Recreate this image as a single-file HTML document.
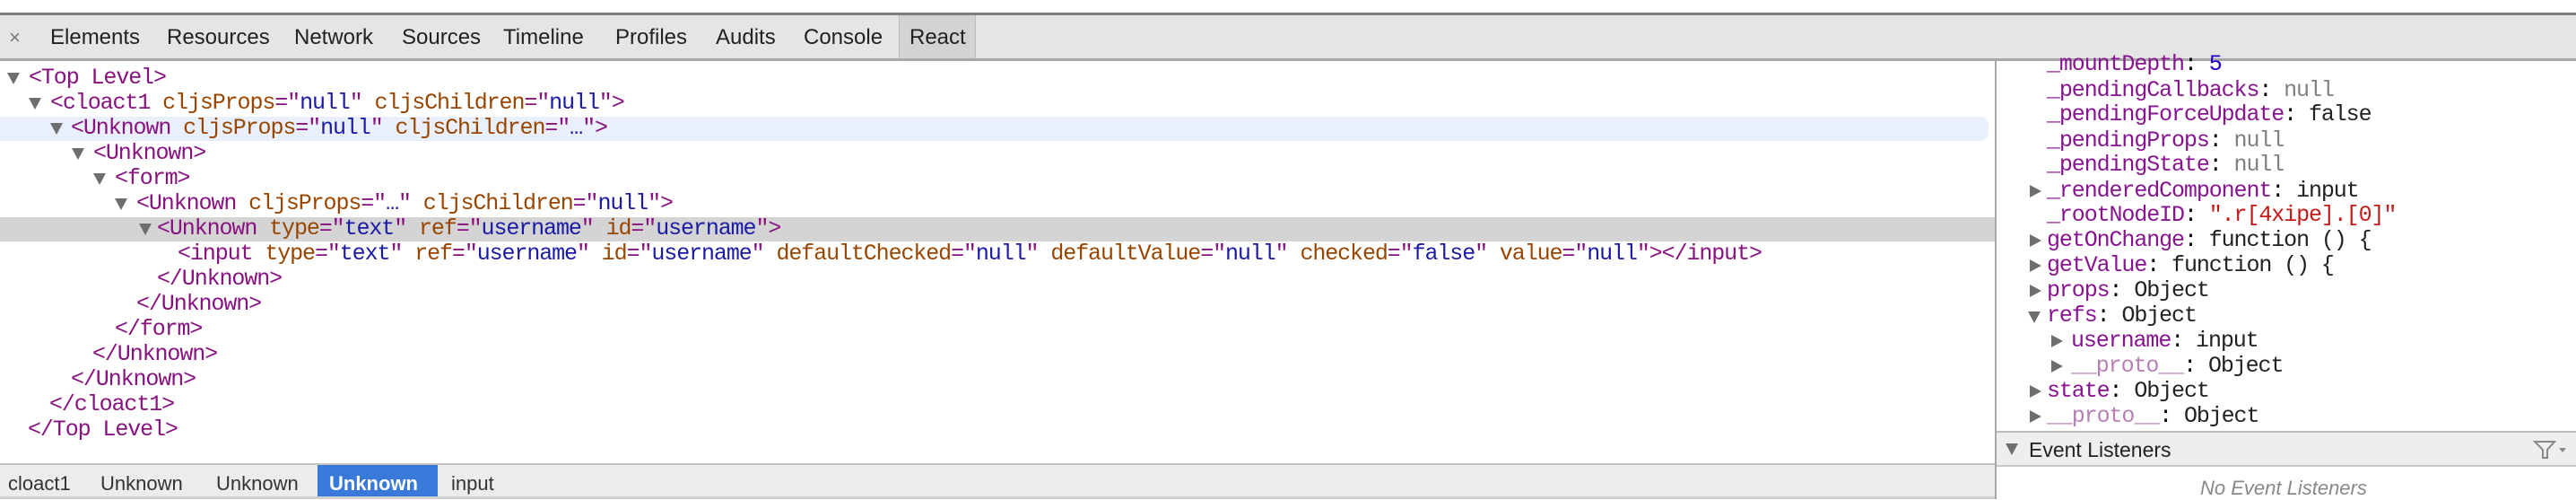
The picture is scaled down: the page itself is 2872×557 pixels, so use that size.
<!DOCTYPE html>
<html><head><meta charset="utf-8"><style>
*{margin:0;padding:0;box-sizing:border-box}
body{width:2872px;height:556px;background:#fff;position:relative;overflow:hidden;font-family:"Liberation Sans",sans-serif}
.tb{position:absolute;left:0;top:14px;width:2872px;height:54px;background:#e5e5e5;border-top:3px solid #7d7d7d;border-bottom:3px solid #a8a8a8}
.tab{position:absolute;top:11px;font-size:24px;color:#222}
.react{position:absolute;left:1002px;top:0;width:86px;height:48px;background:#d3d3d3;border-left:1px solid #bbb;border-right:1px solid #bbb}
.m{font-family:"Liberation Mono",monospace;font-size:25px;letter-spacing:-1.1px;white-space:pre;position:absolute;line-height:28px;height:28px}
.t{color:#881280}.a{color:#994500}.v{color:#1a1aa6}
.tri{position:absolute;width:0;height:0;border-left:7px solid transparent;border-right:7px solid transparent;border-top:13px solid #6e6e6e}
.trr{position:absolute;width:0;height:0;border-top:7px solid transparent;border-bottom:7px solid transparent;border-left:13px solid #6e6e6e}
.k{color:#881391}.n{color:#808080}.b{color:#222}.s{color:#c41a16}.num{color:#1c00cf}.p{color:#b77fb4}
.bc{position:absolute;top:8px;font-size:22px;color:#333}
</style></head><body>
<div class="tb">
<div class="tab" style="left:10px;color:#777;font-size:22px;top:12px">×</div>
<div class="tab" style="left:56px">Elements</div>
<div class="tab" style="left:186px">Resources</div>
<div class="tab" style="left:328px">Network</div>
<div class="tab" style="left:448px">Sources</div>
<div class="tab" style="left:561px">Timeline</div>
<div class="tab" style="left:686px">Profiles</div>
<div class="tab" style="left:798px">Audits</div>
<div class="tab" style="left:896px">Console</div>
<div class="react"></div>
<div class="tab" style="left:1014px">React</div>
</div>

<div style="position:absolute;left:0;top:130px;width:2217px;height:27px;background:#e9f0fb;border-radius:0 9px 9px 0"></div>
<div style="position:absolute;left:0;top:242px;width:2225px;height:27px;background:#d4d4d4"></div>

<div class="tri" style="left:8px;top:81px"></div>
<div class="m t" style="left:32px;top:73px">&lt;Top Level&gt;</div>
<div class="tri" style="left:32px;top:109px"></div>
<div class="m" style="left:56px;top:101px"><span class="t">&lt;cloact1</span> <span class="a">cljsProps</span><span class="t">="</span><span class="v">null</span><span class="t">"</span> <span class="a">cljsChildren</span><span class="t">="</span><span class="v">null</span><span class="t">"&gt;</span></div>
<div class="tri" style="left:56px;top:137px"></div>
<div class="m" style="left:79px;top:129px"><span class="t">&lt;Unknown</span> <span class="a">cljsProps</span><span class="t">="</span><span class="v">null</span><span class="t">"</span> <span class="a">cljsChildren</span><span class="t">="</span><span class="v">…</span><span class="t">"&gt;</span></div>
<div class="tri" style="left:80px;top:165px"></div>
<div class="m t" style="left:104px;top:157px">&lt;Unknown&gt;</div>
<div class="tri" style="left:104px;top:193px"></div>
<div class="m t" style="left:128px;top:185px">&lt;form&gt;</div>
<div class="tri" style="left:128px;top:221px"></div>
<div class="m" style="left:152px;top:213px"><span class="t">&lt;Unknown</span> <span class="a">cljsProps</span><span class="t">="</span><span class="v">…</span><span class="t">"</span> <span class="a">cljsChildren</span><span class="t">="</span><span class="v">null</span><span class="t">"&gt;</span></div>
<div class="tri" style="left:155px;top:249px"></div>
<div class="m" style="left:175px;top:241px"><span class="t">&lt;Unknown</span> <span class="a">type</span><span class="t">="</span><span class="v">text</span><span class="t">"</span> <span class="a">ref</span><span class="t">="</span><span class="v">username</span><span class="t">"</span> <span class="a">id</span><span class="t">="</span><span class="v">username</span><span class="t">"&gt;</span></div>
<div class="m" style="left:198px;top:269px"><span class="t">&lt;input</span> <span class="a">type</span><span class="t">="</span><span class="v">text</span><span class="t">"</span> <span class="a">ref</span><span class="t">="</span><span class="v">username</span><span class="t">"</span> <span class="a">id</span><span class="t">="</span><span class="v">username</span><span class="t">"</span> <span class="a">defaultChecked</span><span class="t">="</span><span class="v">null</span><span class="t">"</span> <span class="a">defaultValue</span><span class="t">="</span><span class="v">null</span><span class="t">"</span> <span class="a">checked</span><span class="t">="</span><span class="v">false</span><span class="t">"</span> <span class="a">value</span><span class="t">="</span><span class="v">null</span><span class="t">"&gt;&lt;/input&gt;</span></div>
<div class="m t" style="left:175px;top:297px">&lt;/Unknown&gt;</div>
<div class="m t" style="left:152px;top:325px">&lt;/Unknown&gt;</div>
<div class="m t" style="left:128px;top:353px">&lt;/form&gt;</div>
<div class="m t" style="left:103px;top:381px">&lt;/Unknown&gt;</div>
<div class="m t" style="left:79px;top:409px">&lt;/Unknown&gt;</div>
<div class="m t" style="left:55px;top:437px">&lt;/cloact1&gt;</div>
<div class="m t" style="left:31px;top:465px">&lt;/Top Level&gt;</div>

<div style="position:absolute;left:0;top:516px;width:2225px;height:40px;background:#ececec;border-top:2px solid #c4c4c4;border-bottom:3px solid #d0d0d0">
<div class="bc" style="left:9px">cloact1</div>
<div class="bc" style="left:112px">Unknown</div>
<div class="bc" style="left:241px">Unknown</div>
<div style="position:absolute;left:354px;top:0;width:134px;height:35px;background:#3879d9"></div>
<div class="bc" style="left:367px;color:#fff;font-weight:bold">Unknown</div>
<div class="bc" style="left:503px">input</div>
</div>

<div style="position:absolute;left:2224px;top:68px;width:2px;height:488px;background:#a8a8a8"></div>
<div class="m" style="left:2282px;top:58px"><span class="k">_mountDepth</span>: <span class="num">5</span></div>
<div class="m" style="left:2282px;top:87px"><span class="k">_pendingCallbacks</span>: <span class="n">null</span></div>
<div class="m" style="left:2282px;top:114px"><span class="k">_pendingForceUpdate</span>: <span class="b">false</span></div>
<div class="m" style="left:2282px;top:143px"><span class="k">_pendingProps</span>: <span class="n">null</span></div>
<div class="m" style="left:2282px;top:170px"><span class="k">_pendingState</span>: <span class="n">null</span></div>
<div class="trr" style="left:2263px;top:206px"></div>
<div class="m" style="left:2282px;top:199px"><span class="k">_renderedComponent</span>: <span class="b">input</span></div>
<div class="m" style="left:2282px;top:226px"><span class="k">_rootNodeID</span>: <span class="s">".r[4xipe].[0]"</span></div>
<div class="trr" style="left:2263px;top:261px"></div>
<div class="m" style="left:2282px;top:254px"><span class="k">getOnChange</span>: <span class="b">function () {</span></div>
<div class="trr" style="left:2263px;top:289px"></div>
<div class="m" style="left:2282px;top:282px"><span class="k">getValue</span>: <span class="b">function () {</span></div>
<div class="trr" style="left:2263px;top:317px"></div>
<div class="m" style="left:2282px;top:310px"><span class="k">props</span>: <span class="b">Object</span></div>
<div class="tri" style="left:2261px;top:347px"></div>
<div class="m" style="left:2282px;top:338px"><span class="k">refs</span>: <span class="b">Object</span></div>
<div class="trr" style="left:2287px;top:373px"></div>
<div class="m" style="left:2309px;top:366px"><span class="k">username</span>: <span class="b">input</span></div>
<div class="trr" style="left:2287px;top:401px"></div>
<div class="m" style="left:2309px;top:394px"><span class="p">__proto__</span>: <span class="b">Object</span></div>
<div class="trr" style="left:2263px;top:429px"></div>
<div class="m" style="left:2282px;top:422px"><span class="k">state</span>: <span class="b">Object</span></div>
<div class="trr" style="left:2263px;top:457px"></div>
<div class="m" style="left:2282px;top:450px"><span class="p">__proto__</span>: <span class="b">Object</span></div>

<div style="position:absolute;left:2226px;top:480px;width:646px;height:40px;background:#eeeeee;border-top:2px solid #bdbdbd;border-bottom:2px solid #c8c8c8">
<div class="tri" style="left:10px;top:12px"></div>
<div style="position:absolute;left:36px;top:6px;font-size:23px;color:#222">Event Listeners</div>
<svg style="position:absolute;left:598px;top:8px" width="40" height="22" viewBox="0 0 40 22"><path d="M2 2 H24 L16 11 V20 H11 V11 Z" fill="none" stroke="#888" stroke-width="2"/><path d="M29 9 H37 L33 14 Z" fill="#888"/></svg>
</div>
<div style="position:absolute;left:2453px;top:531px;font-size:22px;font-style:italic;color:#888">No Event Listeners</div>
</body></html>
